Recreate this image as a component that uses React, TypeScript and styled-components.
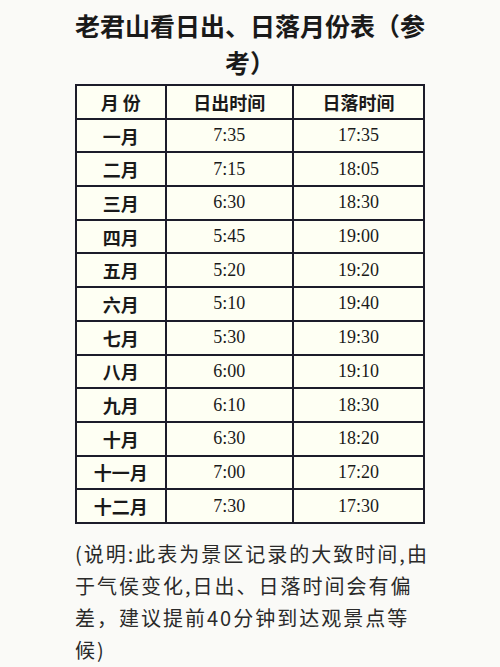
import styled, { createGlobalStyle } from 'styled-components';

const GlobalStyle = createGlobalStyle`
  html, body {
    margin: 0;
    padding: 0;
    background: #fafaf7;
  }
`;

const Page = styled.div`
  width: 350px;
  margin: 0 auto;
  padding-top: 7px;
  font-family: "Noto Sans CJK SC", "Noto Sans", sans-serif;
  color: #1a1a1a;
`;

const Title = styled.h1`
  margin: 0;
  font-size: 25px;
  font-weight: 700;
  line-height: 37px;
  text-align: center;
  color: #1a1a1a;
`;

const Table = styled.table`
  margin-top: 3px;
  width: 350px;
  border-collapse: collapse;
  background: #fefff3;
  border: 2px solid #1c1c2a;
`;

const HeadCell = styled.th<{ $w: number }>`
  width: ${(p) => p.$w}px;
  height: 31.7px;
  padding: 0;
  border: 2px solid #1c1c2a;
  font-size: 18px;
  font-weight: 700;
  text-align: center;
  white-space: pre;
`;

const MonthCell = styled.td`
  height: 31.7px;
  padding: 0;
  border: 2px solid #1c1c2a;
  font-size: 18px;
  font-weight: 700;
  text-align: center;
`;

const TimeCell = styled.td`
  height: 31.7px;
  padding: 0;
  border: 2px solid #1c1c2a;
  font-family: "Liberation Serif", "Times New Roman", serif;
  font-size: 18px;
  text-align: center;
  color: #1a1a1a;
`;

const Note = styled.p`
  margin: 14px 0 0;
  font-size: 20px;
  line-height: 32px;
  letter-spacing: 2px;
  color: #2a2a2a;
  white-space: nowrap;
`;

const rows: [string, string, string][] = [
  ['一月', '7:35', '17:35'],
  ['二月', '7:15', '18:05'],
  ['三月', '6:30', '18:30'],
  ['四月', '5:45', '19:00'],
  ['五月', '5:20', '19:20'],
  ['六月', '5:10', '19:40'],
  ['七月', '5:30', '19:30'],
  ['八月', '6:00', '19:10'],
  ['九月', '6:10', '18:30'],
  ['十月', '6:30', '18:20'],
  ['十一月', '7:00', '17:20'],
  ['十二月', '7:30', '17:30'],
];

export default function App(): JSX.Element {
  return (
    <>
      <GlobalStyle />
      <Page>
        <Title>老君山看日出、日落月份表（参考）</Title>
        <Table>
          <thead>
            <tr>
              <HeadCell $w={90}>月 份</HeadCell>
              <HeadCell $w={128}>日出时间</HeadCell>
              <HeadCell $w={132}>日落时间</HeadCell>
            </tr>
          </thead>
          <tbody>
            {rows.map(([month, rise, set]) => (
              <tr key={month}>
                <MonthCell>{month}</MonthCell>
                <TimeCell>{rise}</TimeCell>
                <TimeCell>{set}</TimeCell>
              </tr>
            ))}
          </tbody>
        </Table>
        <Note>
          (说明:此表为景区记录的大致时间,由
          <br />
          于气侯变化,日出、日落时间会有偏
          <br />
          差，建议提前40分钟到达观景点等
          <br />
          候)
        </Note>
      </Page>
    </>
  );
}
